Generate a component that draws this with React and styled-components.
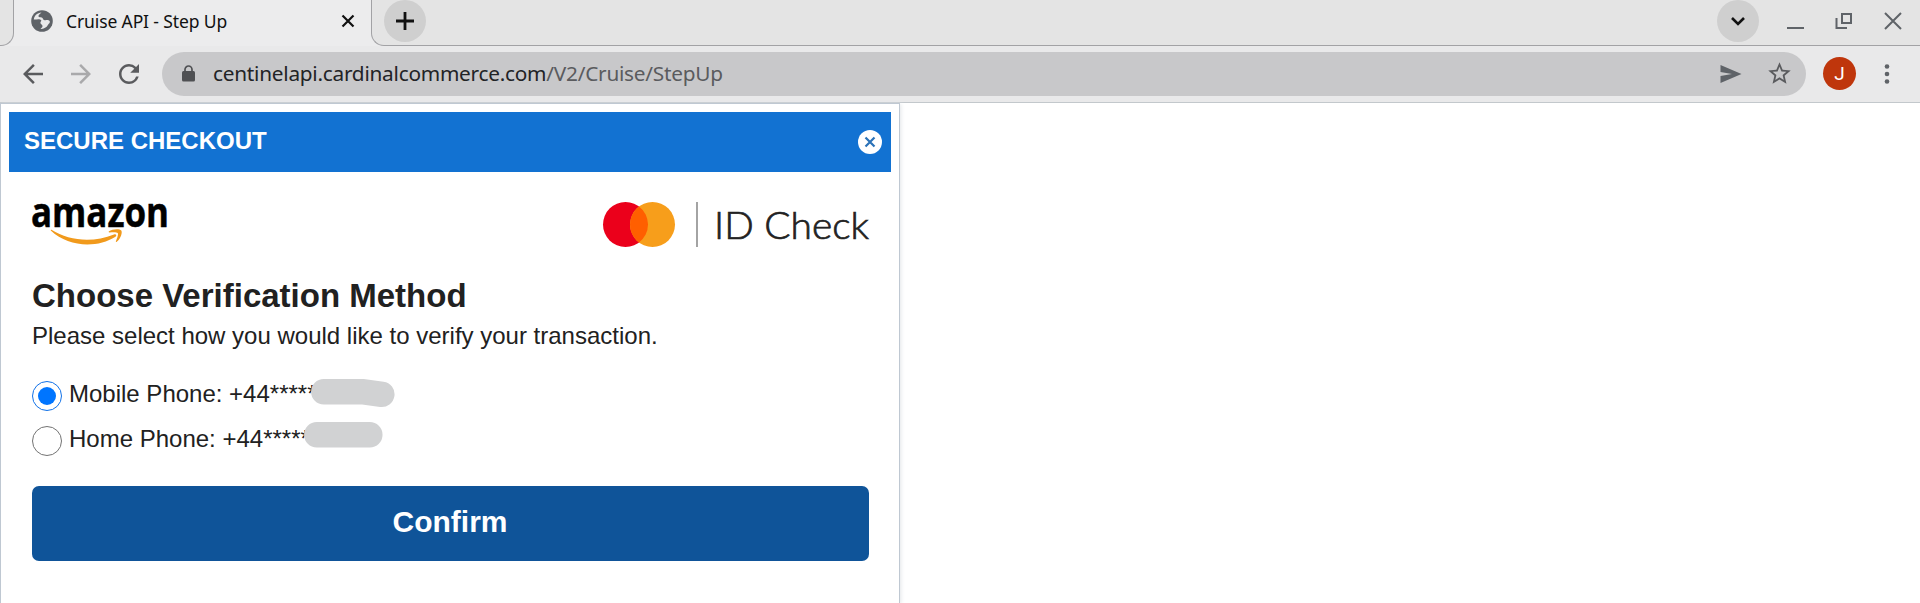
import React from "react";
import styled, { createGlobalStyle } from "styled-components";
import { MdArrowBack, MdArrowForward, MdRefresh, MdStarBorder } from "react-icons/md";

const GlobalStyle = createGlobalStyle`
  * { box-sizing: border-box; }
  body { margin: 0; background: #fff; overflow: hidden; }
  h1, p { margin: 0; }
`;

const Window = styled.div`
  height: 603px;
  display: flex;
  flex-direction: column;
  font-family: "Liberation Sans", Arial, sans-serif;
  color: #212121;
`;

const TabStrip = styled.div`
  display: flex;
  height: 46px;
  background: #ececed;
`;

const PreviousTab = styled.div`
  width: 14px;
  background: #e4e4e4;
  border: solid #a2a2a5;
  border-width: 0 1.5px 1.5px 0;
  border-bottom-right-radius: 13px;
`;

const ActiveTab = styled.div`
  display: flex;
  align-items: center;
  width: 357px;
  height: 41px;
  padding: 0 16px 0 16px;
`;

const TabTitle = styled.span`
  flex: 1;
  margin-left: 12px;
  font: 17.5px/24px "Noto Sans", sans-serif;
  letter-spacing: -0.12px;
  color: #111;
  white-space: nowrap;
`;

const StripRest = styled.div`
  flex: 1;
  display: flex;
  align-items: flex-start;
  background: #e4e4e4;
  border: solid #a2a2a5;
  border-width: 0 0 1.5px 1.5px;
  border-bottom-left-radius: 13px;
  padding-left: 12px;
`;

const RoundButton = styled.div`
  display: grid;
  place-items: center;
  width: 42px;
  height: 42px;
  border-radius: 50%;
  background: #cfcfcf;
`;

const WindowControls = styled.div`
  display: flex;
  align-items: center;
  gap: 31px;
  margin-left: auto;
  padding-right: 18px;
  height: 42px;
  ${RoundButton} { margin-right: -3px; }
`;

const Toolbar = styled.div`
  display: flex;
  align-items: center;
  height: 57px;
  padding: 0 29px 1px 18px;
  background: #e9e9ea;
  border-bottom: 1px solid #c3c8cc;
`;

const NavButtons = styled.div`
  display: flex;
  gap: 18px;
  width: 144px;
  color: #5a5b5e;
  svg { display: block; }
`;

const Muted = styled.span`
  color: #a9a9ab;
`;

const AddressBar = styled.div`
  flex: 1;
  display: flex;
  align-items: center;
  height: 44px;
  padding: 0 13px 0 20px;
  border-radius: 22px;
  background: #c8c8ca;
  color: #5a5b5e;
`;

const Url = styled.span`
  flex: 1;
  margin: -1px 0 0 18px;
  font: 20.8px/30px "Noto Sans", sans-serif;
  letter-spacing: -0.25px;
  color: #222326;
  white-space: nowrap;
`;

const UrlPath = styled.span`
  color: #5a5b5e;
`;

const BarIcons = styled.div`
  display: flex;
  align-items: center;
  gap: 24px;
`;

const Avatar = styled.div`
  width: 33px;
  height: 33px;
  margin: 0 27px 0 17px;
  border-radius: 50%;
  background: #bf360c;
  color: #fff;
  font: 19px/33px Roboto, sans-serif;
  text-align: center;
`;

const Card = styled.main`
  flex: 1;
  width: 900px;
  padding: 8px 8px 0;
  border: solid #bfc8d2;
  border-width: 1px 1px 0;
  box-shadow: 1px 1px 4px #e3e6e9;
`;

const CardHeader = styled.header`
  display: flex;
  align-items: center;
  justify-content: space-between;
  height: 60px;
  padding: 0 9px 0 15px;
  background: #1272d2;
  color: #fff;
  font-size: 24px;
  font-weight: 700;
`;

const HeaderTitle = styled.span`
  line-height: 28px;
  margin-top: -3px;
  white-space: nowrap;
`;

const CardBody = styled.div`
  padding: 25px 22px 0 23px;
`;

const Logos = styled.div`
  display: flex;
  justify-content: space-between;
  height: 56px;
  svg { display: block; overflow: visible; }
`;

const Heading = styled.h1`
  margin-top: 24px;
  font-size: 33px;
  line-height: 38px;
  white-space: nowrap;
`;

const Intro = styled.p`
  margin-top: 7px;
  font-size: 24px;
  line-height: 28px;
  white-space: nowrap;
`;

const Options = styled.div`
  display: flex;
  flex-direction: column;
  gap: 15px;
  margin-top: 31px;
`;

const Option = styled.label`
  position: relative;
  display: flex;
  height: 30px;
  font-size: 24px;
  line-height: 28px;
  white-space: nowrap;
`;

const Radio = styled.span`
  display: grid;
  place-items: center;
  width: 30px;
  height: 30px;
  margin: 0 7px 0 0;
  border: 1.5px solid ${(p) => (p.$checked ? "#1272e8" : "#737373")};
  border-radius: 50%;
  &::after {
    content: "";
    width: 18px;
    height: 18px;
    border-radius: 50%;
    background: ${(p) => (p.$checked ? "#0075ff" : "transparent")};
  }
`;

const OptionText = styled.span`
  margin-top: -1px;
`;

const Smudge = styled.svg`
  position: absolute;
  left: ${(p) => p.$left}px;
  top: ${(p) => p.$top}px;
  fill: none;
  stroke: #d1d2d3;
  stroke-width: 25.5;
  stroke-linecap: round;
  stroke-linejoin: round;
`;

const Confirm = styled.button`
  display: block;
  width: 100%;
  height: 75px;
  margin-top: 30px;
  padding: 0 1px 3px 0;
  border: 0;
  border-radius: 7px;
  background: #0f5499;
  color: #fff;
  font: 700 30px/36px "Liberation Sans", Arial, sans-serif;
`;

const Globe = () => (
  <svg width="24" height="24" viewBox="0 0 24 24">
    <circle cx="12" cy="12" r="10.800" fill="#5f6368" />
    <path d="M3.800 10.500C4.300 6.500 7.500 3.800 11.500 3.500 10 4.700 8 6 8.500 7.500c.4 1.200 2 .6 3.200 1 1.500.5 1 2 2.300 2.500 1.700.6 2.800-.3 4.500.2 2 .6 1.500 2.500.3 3.600-1.300 1.200-1.300 2.700-3.300 3.800-1.600 1-3.500 1.700-5 1.200 1-.7 2-1.500 2-2.800 0-1.600-1.700-1.300-2-2.800-.3-1.800 1.500-2 .5-3.200-1.200-1.400-4.300-.5-7.200-.5Z" fill="#e9e9ea" />
  </svg>
);

const LockIcon = () => (
  <svg width="13" height="17" viewBox="0 0 13 17">
    <rect x="0" y="6" width="13" height="10.500" rx="1.500" fill="#4f5053" />
    <path d="M3 7V4.500a3.500 3.500 0 0 1 7 0V7" fill="none" stroke="#4f5053" strokeWidth="1.700" />
  </svg>
);

const AmazonLogo = () => (
  <svg width="138" height="50" viewBox="0 0 138 50">
    <text x="-1" y="30" fontFamily="Open Sans" fontWeight="700" fontSize="41" textLength="138" lengthAdjust="spacingAndGlyphs" fill="#000" stroke="#000" strokeWidth=".5">amazon</text>
    <path d="M19.500 32.800C37 44 61 46 82 37.500c2-.8 3.200 1 1.500 2.200C65 51.500 36 50 19 33.800c-.5-.6-.1-1.400.5-1Z" fill="#f19a1c" />
    <path d="M77 34.300c3-2.200 10.500-2.700 12.300-.8 1.300 2-.5 8-4.500 11.200-.7.500-1.200.2-.9-.500 1.400-3.500 2.700-7 1.800-8.200-.9-1.100-4.800-.9-8.200-.6-.9 0-1.200-.6-.5-1.100Z" fill="#f19a1c" />
  </svg>
);

const IdCheckLogo = () => (
  <svg width="267" height="56" viewBox="0 0 267 56">
    <circle cx="23.500" cy="27.500" r="22.500" fill="#eb001b" />
    <circle cx="50.500" cy="27.500" r="22.500" fill="#f79e1b" />
    <path d="M37 9.500a22.500 22.500 0 0 1 0 36 22.500 22.500 0 0 1 0-36Z" fill="#ff5f00" />
    <path d="M95 5v45" stroke="#8d8d8d" strokeWidth="1.600" />
    <text x="112" y="41.500" fontFamily="Lato" fontWeight="300" fontSize="36.500" textLength="155" lengthAdjust="spacingAndGlyphs" fill="#222" stroke="#222" strokeWidth=".7">ID Check</text>
  </svg>
);

export default function App() {
  return (
    <Window>
      <GlobalStyle />
      <TabStrip>
        <PreviousTab />
        <ActiveTab>
          <Globe />
          <TabTitle>Cruise API - Step Up</TabTitle>
          <svg width="14" height="14" viewBox="0 0 14 14"><path d="m1.500 1.500 11 11m0-11-11 11" stroke="#111" strokeWidth="2.200" /></svg>
        </ActiveTab>
        <StripRest>
          <RoundButton>
            <svg width="18" height="18" viewBox="0 0 18 18"><path d="M9 0v18M0 9h18" stroke="#111" strokeWidth="2.800" /></svg>
          </RoundButton>
          <WindowControls>
            <RoundButton>
              <svg width="16" height="12" viewBox="0 0 16 12"><path d="m2 3 6 6 6-6" fill="none" stroke="#111" strokeWidth="2.600" /></svg>
            </RoundButton>
            <svg width="17" height="18" viewBox="0 0 17 18"><path d="M0 16h17" stroke="#5f6368" strokeWidth="2" /></svg>
            <svg width="18" height="18" viewBox="0 0 18 18"><path d="M7 2h9v9H7zM1.500 6v10H12" fill="none" stroke="#5f6368" strokeWidth="2" /></svg>
            <svg width="18" height="18" viewBox="0 0 18 18"><path d="m1 1 16 16m0-16L1 17" stroke="#5f6368" strokeWidth="2" /></svg>
          </WindowControls>
        </StripRest>
      </TabStrip>
      <Toolbar>
        <NavButtons>
          <MdArrowBack size={30} />
          <Muted><MdArrowForward size={30} /></Muted>
          <MdRefresh size={30} />
        </NavButtons>
        <AddressBar>
          <LockIcon />
          <Url>centinelapi.cardinalcommerce.com<UrlPath>/V2/Cruise/StepUp</UrlPath></Url>
          <BarIcons>
            <svg width="22" height="20" viewBox="0 0 22 20"><path d="M.500 1 21.500 10 .500 19v-7L12 10 .500 8Z" fill="#5f6368" /></svg>
            <MdStarBorder size={27} />
          </BarIcons>
        </AddressBar>
        <Avatar>J</Avatar>
        <svg width="8" height="22" viewBox="0 0 8 22" fill="#5f6368"><circle cx="4" cy="3.500" r="2.300" /><circle cx="4" cy="11" r="2.300" /><circle cx="4" cy="18.500" r="2.300" /></svg>
      </Toolbar>
      <Card>
        <CardHeader>
          <HeaderTitle>SECURE CHECKOUT</HeaderTitle>
          <svg width="24" height="24" viewBox="0 0 24 24"><circle cx="12" cy="12" r="12" fill="#fff" /><path d="m7.500 7.500 9 9m0-9-9 9" stroke="#2a72b8" strokeWidth="2.200" /></svg>
        </CardHeader>
        <CardBody>
          <Logos>
            <AmazonLogo />
            <IdCheckLogo />
          </Logos>
          <Heading>Choose Verification Method</Heading>
          <Intro>Please select how you would like to verify your transaction.</Intro>
          <Options>
            <Option>
              <Radio $checked />
              <OptionText>Mobile Phone: +44*****</OptionText>
              <Smudge $left={279} $top={-2} width="84" height="29" viewBox="0 0 84 29"><path d="M12.800 12.800h40l18 2.500" /></Smudge>
            </Option>
            <Option>
              <Radio />
              <OptionText>Home Phone: +44*****</OptionText>
              <Smudge $left={272} $top={-4} width="79" height="26" viewBox="0 0 79 26"><path d="M12.800 12.800h53" /></Smudge>
            </Option>
          </Options>
          <Confirm>Confirm</Confirm>
        </CardBody>
      </Card>
    </Window>
  );
}
